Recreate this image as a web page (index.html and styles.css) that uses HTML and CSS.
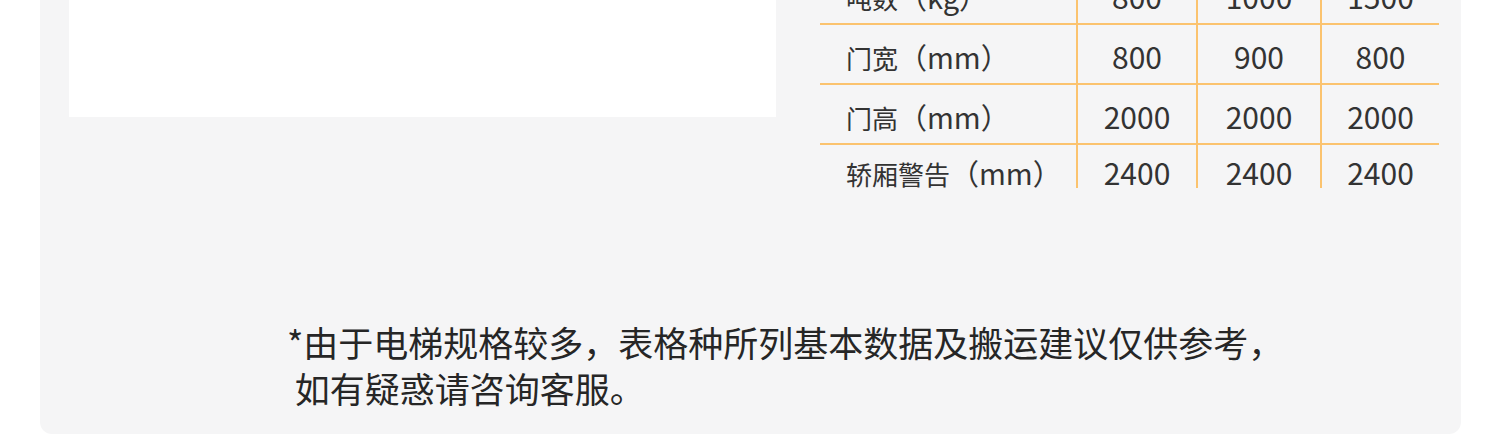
FILE: index.html
```html
<!DOCTYPE html>
<html lang="zh-CN">
<head>
  <meta charset="UTF-8">
  <title>电梯规格</title>
  <link rel="stylesheet" href="styles.css">
</head>
<body>

  <div class="panel">
    <div class="top">
      <div class="photo"></div>
      <div class="spec-wrap">
        <table class="spec">
          <tr>
            <td class="label">吨数<span class="unit">（kg）</span></td>
            <td>800</td>
            <td>1000</td>
            <td>1500</td>
          </tr>
          <tr>
            <td class="label">门宽<span class="unit">（mm）</span></td>
            <td>800</td>
            <td>900</td>
            <td>800</td>
          </tr>
          <tr>
            <td class="label">门高<span class="unit">（mm）</span></td>
            <td>2000</td>
            <td>2000</td>
            <td>2000</td>
          </tr>
          <tr class="last">
            <td class="label">轿厢警告<span class="unit">（mm）</span></td>
            <td>2400</td>
            <td>2400</td>
            <td>2400</td>
          </tr>
        </table>
      </div>
    </div>

    <p class="note">*由于电梯规格较多，表格种所列基本数据及搬运建议仅供参考，<br> 如有疑惑请咨询客服。</p>
  </div>

</body>
</html>
```

FILE: styles.css
```css
body {
  margin: 0;
  background: #ffffff;
  font-family: "Noto Sans CJK SC", "Noto Sans", sans-serif;
  color: #2b2b2b;
}
.panel {
  width: 1421px;
  height: 434px;
  margin-left: 40px;
  background: #f5f5f6;
  border-radius: 0 0 12px 12px;
  overflow: hidden;
}
.top {
  display: flex;
  align-items: flex-start;
  padding-left: 29px;
}
.photo {
  width: 707px;
  height: 117px;
  background: #ffffff;
}
.spec-wrap {
  margin-left: 44px;
  width: 619px;
  height: 188px;
  overflow: hidden;
}
.spec {
  margin-top: -35px;
  border-collapse: separate;
  border-spacing: 0;
  width: 619px;
  table-layout: fixed;
}
.spec td {
  box-sizing: border-box;
  height: 60px;
  padding: 4px 0 0;
  text-align: center;
  font-size: 30px;
  color: #333333;
  border-bottom: 2px solid #fbc36f;
  border-right: 2px solid #fbc36f;
}
.spec td:nth-child(1) { width: 258px; }
.spec td:nth-child(2) { width: 120px; }
.spec td:nth-child(3) { width: 124px; }
.spec td:last-child {
  border-right: none;
}
.spec .last td {
  border-bottom: none;
  padding: 0 0 6px;
}
.spec td.label {
  text-align: left;
  padding-left: 26px;
  font-size: 26px;
}
.unit {
  font-size: 29px;
}
.note {
  margin: 131px 0 0 247px;
  font-size: 35px;
  line-height: 46px;
  color: #262626;
  white-space: pre;
}
```
